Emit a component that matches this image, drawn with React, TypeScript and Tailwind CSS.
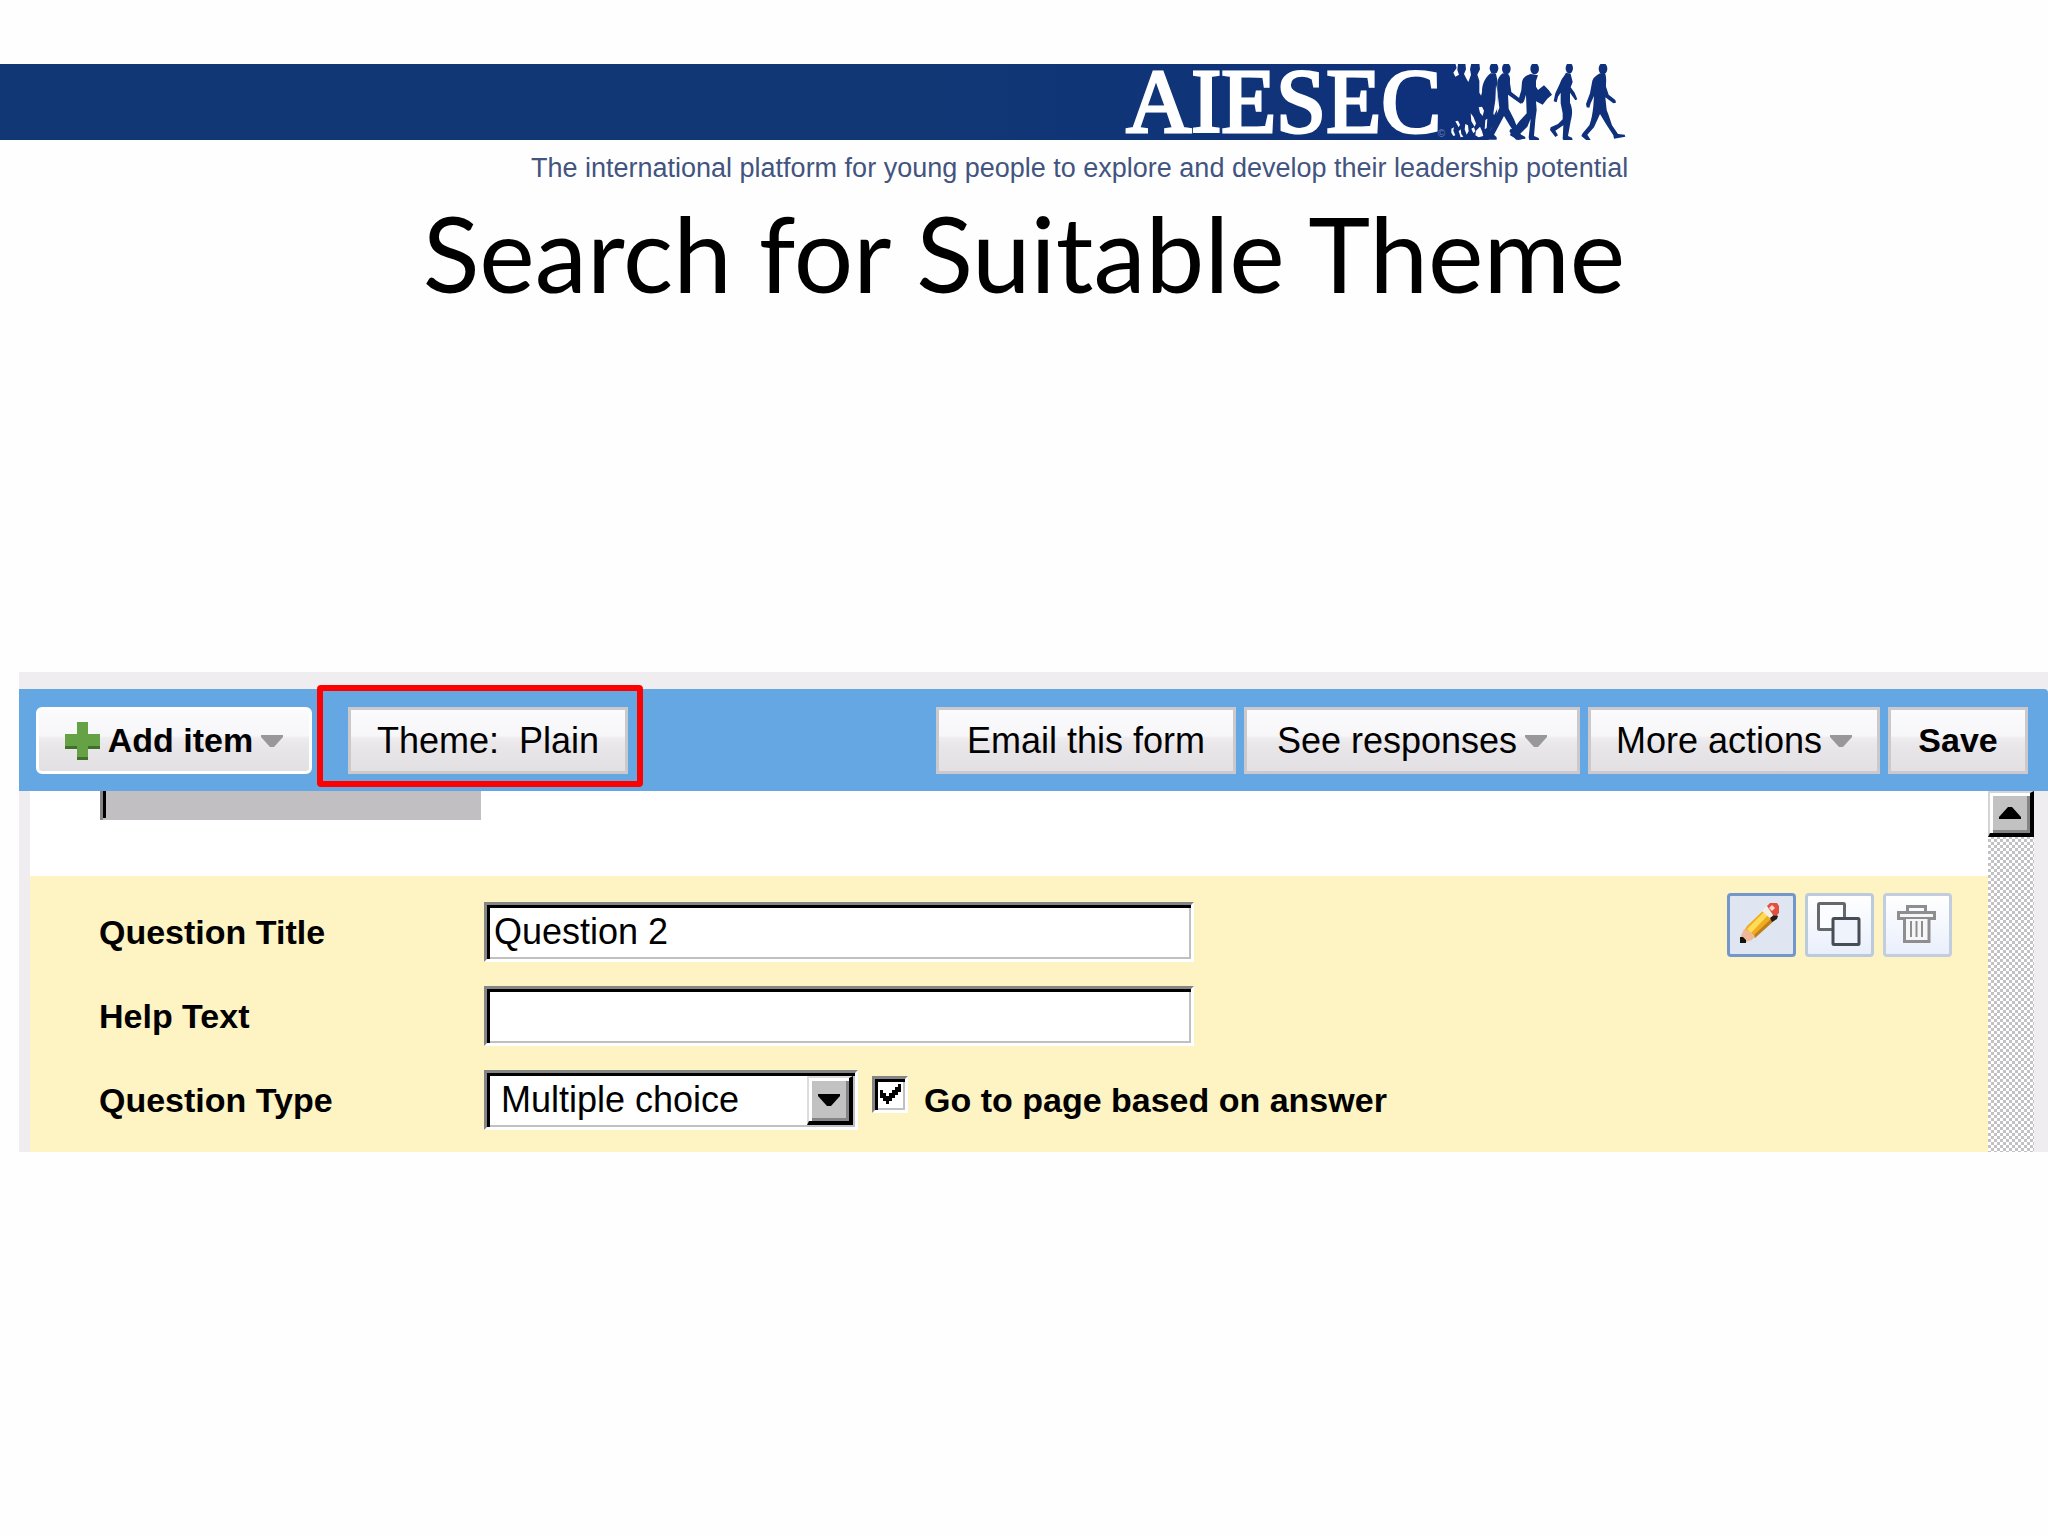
import React, { useState } from 'react';

const sans = "font-['Liberation_Sans',Arial,sans-serif]";

const toolbarButton =
  'flex h-[67px] shrink-0 items-center justify-center gap-2 whitespace-pre border-[3px] border-[#cbc9cc] bg-[linear-gradient(#fbfafc_0%,#f7f6f8_42%,#eeecef_46%,#e8e6e9_60%,#e2e0e3_100%)] text-black';

const fieldBox =
  'h-[60px] border-[3px] border-t-[#858585] border-l-[#858585] border-r-white border-b-white bg-white text-[36px] text-black shadow-[inset_3px_3px_0_#000,inset_-2px_-2px_0_#c0c0c0] outline-none rounded-none';

const DownArrow = () => (
  <svg width="22" height="12" viewBox="0 0 22 12" aria-hidden="true" className="shrink-0">
    <path d="M0 0h22v2L13 12H9L0 2z" fill="#989898" />
  </svg>
);

const PlusIcon = () => (
  <svg width="35" height="38" viewBox="0 0 35 38" aria-hidden="true" className="shrink-0">
    <path d="M12 0h11v12h12v14H23v12H12V26H0V12h12z" fill="#65a245" />
    <path d="M0 24h12v3H0zM23 24h12v3H23zM12 35h11v3H12z" fill="#41702d" />
  </svg>
);

const WalkingPeople = () => (
  <svg
    width="183"
    height="76"
    viewBox="135 27 549 228"
    aria-hidden="true"
    className="shrink-0"
    fill="#0f307b"
  >
    <g transform="translate(90 15)">
      {/* crowd that merges with the banner */}
      <path d="M40 10H76L80 24 70 38 76 50 87 44 82 30 84 10H106L108 28 102 42 110 58 115 66 123 44 120 28 124 10H148L150 28 142 44 148 62 148 98 156 112 170 160 176 242H40Z" />
      <path d="M182 40C164 54 156 74 156 96L150 120 168 160 160 200 168 236H190L182 210 200 170 204 110 202 60 198 42Z" />
      <ellipse cx="192" cy="25" rx="13" ry="17" />
      <g fill="#fdfdff">
        <path d="M64 206L72 202 70 212 76 226 70 228 64 218ZM76 184L84 182 90 194 86 202ZM86 214L92 208 94 222 100 230 92 232ZM106 192L114 196 116 214 110 224 104 208ZM122 160L130 170 138 190 134 200 124 184ZM124 206L132 202 136 214 130 220ZM146 142L156 140 162 152 158 168 150 158ZM138 212L150 200 156 214 160 228 146 232 136 226ZM166 180L172 176 170 204 164 208ZM198 74L203 96 204 142 192 166 190 160 196 120Z" />
      </g>
      {/* leader of the crowd */}
      <path d="M218 40C208 48 203 56 202 70L204 110 208 144 188 190 178 226 168 232V239H200V232L192 224 222 168 240 198 254 218 244 212 240 226 264 240 282 236 268 218 252 178 236 146 234 104 272 131 280 124 244 96 240 70C240 58 242 50 234 42Z" />
      <ellipse cx="229" cy="26" rx="13" ry="17" />
    </g>
    <g transform="translate(390 15)">
      {/* figure with the drum */}
      <path d="M2 42C-12 46 -22 54 -24 66L-26 90 -34 118 -24 131 -18 124 -12 104 -10 160 -32 184 -50 208 -58 206 -62 214 -42 239 -14 236V231L-30 222 -8 200 2 176 -4 232 -2 241H28L26 234 12 228 16 180 20 150 18 124 38 134 52 116 66 104 56 90 42 76 24 90 18 80 18 62 24 46Z" />
      <ellipse cx="14" cy="26" rx="13" ry="17" />
      <path d="M108 38C102 50 94 56 90 70L76 100 71 124 80 127 84 110 92 98 92 130 98 160 98 178 84 192 62 202 60 210 76 231 84 226 76 212 100 196 98 238 104 242 128 240 126 233 114 228 122 184C128 160 128 146 120 128L120 98 136 121 142 118 134 98 122 82 128 66 122 42Z" />
      <ellipse cx="118" cy="25" rx="11" ry="16" />
      <path d="M210 40C200 46 190 52 187 62L180 100 168 132 170 142 178 143 182 130 192 108 190 138C188 160 184 180 178 196L158 220 154 228 172 243 182 240 172 224 192 202 210 162 228 192 250 226 252 236 286 230 284 224 264 222 246 196 236 166 230 150 226 112 250 130 258 128 256 120 236 104 228 80C228 64 230 56 226 42Z" />
      <ellipse cx="219" cy="26" rx="13" ry="17" />
    </g>
  </svg>
);

const PencilIcon = () => (
  <svg width="63" height="58" viewBox="3 3 63 58" aria-hidden="true">
    <path d="M14 43l6-10 18-17 9 9-19 18-9 6h-5z" fill="#efab22" />
    <path d="M20 36l19-19 4 3-19 20z" fill="#ffdc55" />
    <path d="M26 43l19-18 3 2-20 18z" fill="#bf7e1a" />
    <path d="M14 43l3-7 5 2 6 5-3 4-6 2h-5z" fill="#efb995" />
    <path d="M13 44h3l3 3v3h-6z" fill="#111" />
    <path d="M35 18l4-5 9 9-3 5z" fill="#f2efe8" />
    <path d="M43 25l5-4 3 2-1 3-5 3z" fill="#241c18" />
    <path d="M40 13l3-3h7l2 3v7l-3 3-3-1z" fill="#e2513d" />
    <path d="M42 15l3-3 3 3-3 3z" fill="#ffd8ce" />
  </svg>
);

const CopyIcon = () => (
  <svg width="63" height="58" viewBox="3 3 63 58" aria-hidden="true" strokeWidth="3">
    <rect x="13.5" y="10.5" width="26" height="26" rx="1" fill="#fbfcff" stroke="#66686c" />
    <rect x="28" y="25.5" width="26" height="26" rx="1" fill="#eef3fc" stroke="#484c54" />
  </svg>
);

const TrashIcon = () => (
  <svg width="63" height="58" viewBox="3 3 63 58" aria-hidden="true" fill="none" stroke="#8e8e90" strokeWidth="3">
    <path d="M24.5 19V13.5H42.500V19" />
    <rect x="15.5" y="19.5" width="36" height="6" fill="#f6f6f8" />
    <path d="M21.5 26V48.5H46V26" fill="#f6f6f8" />
    <path d="M28 28V44M33.500 28V44M39 28V44" strokeWidth="2" />
  </svg>
);

const iconButtons = [
  { label: 'Edit', icon: <PencilIcon />, look: 'border-[#7397cb] bg-[#dfe6f2]' },
  { label: 'Duplicate', icon: <CopyIcon />, look: 'border-[#bccadd] bg-linear-to-b from-white to-[#e9effb]' },
  { label: 'Delete', icon: <TrashIcon />, look: 'border-[#c2cddd] bg-linear-to-b from-white to-[#e9effb]' },
];

function Banner() {
  return (
    <header className="pr-[20.5%] pt-16">
      <div className="flex">
        <div className="relative flex h-[76px] flex-1 items-center justify-end bg-linear-to-r from-[#113874] from-60% to-[#0f307b] pr-1">
          <span className="font-['Liberation_Serif',serif] text-[90px] leading-[76px] text-white [-webkit-text-stroke:3px_white]">
            AIESEC
          </span>
          <span className={`absolute bottom-0 right-0 text-[10px] leading-3 text-[#6d83b5] ${sans}`}>©</span>
        </div>
        <WalkingPeople />
      </div>
      <p className={`mt-3 whitespace-nowrap text-right text-[27px] leading-8 text-[#42547f] ${sans}`}>
        The international platform for young people to explore and develop their leadership potential
      </p>
    </header>
  );
}

function Toolbar() {
  return (
    <div className="flex items-center rounded-tr-sm bg-[#65a7e3] pb-[17px] pl-[17px] pr-5 pt-[18px]">
      <button
        type="button"
        className={`${toolbarButton} w-[276px] rounded-md border-white text-[34px] font-bold text-[#333]`}
      >
        <PlusIcon />
        Add item
        <DownArrow />
      </button>
      <div className="relative ml-9">
        <button type="button" className={`${toolbarButton} w-[280px] text-[36px]`}>
          {'Theme:  Plain'}
        </button>
        <div className="pointer-events-none absolute -bottom-[13px] -left-[31px] -right-[15px] -top-[22px] rounded-sm border-[6px] border-[#fd0000]" />
      </div>
      <div className="ml-auto flex gap-2">
        <button type="button" className={`${toolbarButton} w-[300px] text-[36px]`}>
          Email this form
        </button>
        <button type="button" className={`${toolbarButton} w-[336px] text-[36px]`}>
          See responses
          <DownArrow />
        </button>
        <button type="button" className={`${toolbarButton} w-[292px] text-[36px]`}>
          More actions
          <DownArrow />
        </button>
        <button type="button" className={`${toolbarButton} w-[140px] text-[34px] font-bold`}>
          Save
        </button>
      </div>
    </div>
  );
}

function QuestionForm() {
  const [title, setTitle] = useState('Question 2');
  const [help, setHelp] = useState('');
  const [branching, setBranching] = useState(true);

  return (
    <div className="flex items-start justify-between bg-[#fef3c3] pr-9">
      <div className="grid grid-cols-[385px_auto] items-center gap-y-6 pb-[22px] pl-[69px] pt-[26px] text-[34px] font-bold">
        <label htmlFor="title">Question Title</label>
        <input
          id="title"
          className={`${fieldBox} w-[710px] px-[7px] font-normal`}
          value={title}
          onChange={(e) => setTitle(e.target.value)}
        />
        <label htmlFor="help">Help Text</label>
        <input
          id="help"
          className={`${fieldBox} w-[710px] px-[7px] font-normal`}
          value={help}
          onChange={(e) => setHelp(e.target.value)}
        />
        <label htmlFor="type">Question Type</label>
        <div className="flex items-center">
          <div className="relative">
            <select id="type" className={`${fieldBox} w-[374px] appearance-none pl-[14px] font-normal`}>
              <option>Multiple choice</option>
            </select>
            <div className="pointer-events-none absolute bottom-[5px] right-[5px] top-[6px] flex w-[46px] items-center justify-center border-2 border-b-4 border-r-4 border-[#dcdcdc] border-b-black border-r-black bg-[#c3c2c3] shadow-[inset_3px_3px_0_#fff,inset_-3px_-3px_0_#858585]">
              <svg width="22" height="12" viewBox="0 0 22 12" aria-hidden="true">
                <path d="M0 0h22v2L13 12H9L0 2z" />
              </svg>
            </div>
          </div>
          <div className="relative mb-3 ml-[14px] h-[37px] w-[36px]">
            <input
              id="branching"
              type="checkbox"
              checked={branching}
              onChange={(e) => setBranching(e.target.checked)}
              className="block size-full appearance-none border-[3px] border-b-white border-l-[#858585] border-r-white border-t-[#858585] bg-white shadow-[inset_3px_3px_0_#000,inset_-2px_-2px_0_#c0c0c0]"
            />
            {branching && (
              <svg
                width="21"
                height="21"
                viewBox="0 0 21 21"
                aria-hidden="true"
                className="pointer-events-none absolute left-2 top-2"
              >
                <path d="M0 6h3v3h3v3h3V9h3V6h3V3h3V0h3v8h-3v3h-3v3h-3v3H9v3H6v-3H3v-3H0z" />
              </svg>
            )}
          </div>
          <label htmlFor="branching" className="ml-4">
            Go to page based on answer
          </label>
        </div>
      </div>
      <div className="flex gap-[9px] pt-[17px]">
        {iconButtons.map((b) => (
          <button
            key={b.label}
            type="button"
            aria-label={b.label}
            className={`rounded-sm border-[3px] ${b.look}`}
          >
            {b.icon}
          </button>
        ))}
      </div>
    </div>
  );
}

function ScrollBar() {
  return (
    <div className="w-[46px] shrink-0 bg-[conic-gradient(#fff_25%,#c2c1c3_0_50%,#fff_0_75%,#c2c1c3_0)] bg-[length:6px_6px]">
      <button
        type="button"
        aria-label="Scroll up"
        className="flex h-[46px] w-full items-center justify-center border-2 border-b-4 border-r-4 border-[#d4d4d4] border-b-black border-r-black bg-[#c3c2c3] shadow-[inset_3px_3px_0_#fff,inset_-3px_-3px_0_#858585]"
      >
        <svg width="22" height="12" viewBox="0 0 22 12" aria-hidden="true">
          <path d="M0 12h22v-2L13 0H9L0 10z" />
        </svg>
      </button>
    </div>
  );
}

export default function App() {
  return (
    <div className="min-h-screen bg-[#fefefe] text-black">
      <Banner />
      <h1 className="mt-2 text-center font-['Lato',sans-serif] text-[105px] leading-[120px]">
        Search for Suitable Theme
      </h1>
      <main className={`ml-[19px] mt-[360px] bg-[#efedf0] pt-[17px] ${sans}`}>
        <Toolbar />
        <div className="flex pl-[11px] pr-[14px]">
          <div className="flex-1 bg-white">
            <div className="h-[85px] pl-[70px]">
              <div className="h-[29px] w-[381px] border-l-[3px] border-[#858585] bg-[#c2bfc2]">
                <div className="h-[27px] w-[3px] bg-black" />
              </div>
            </div>
            <QuestionForm />
          </div>
          <ScrollBar />
        </div>
      </main>
    </div>
  );
}
